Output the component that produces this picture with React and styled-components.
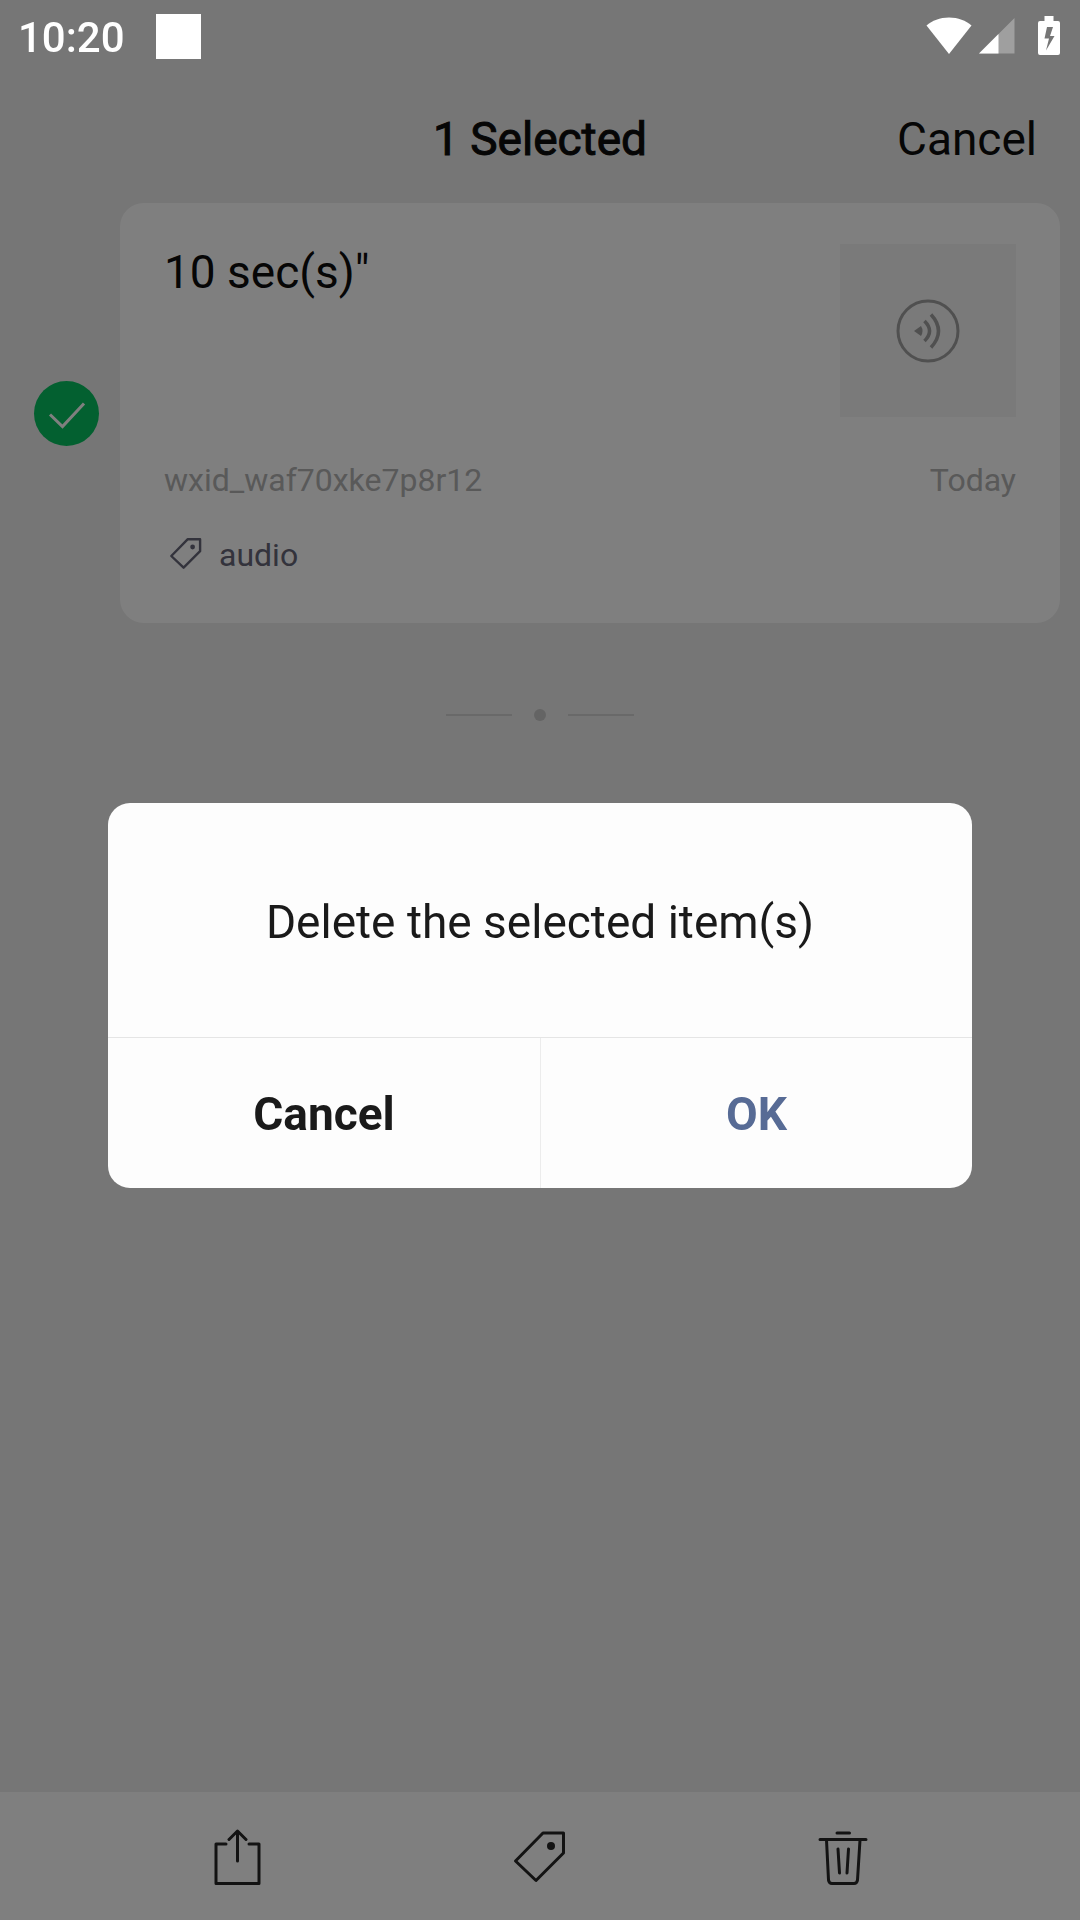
import React, { useState } from "react";
import styled, { createGlobalStyle } from "styled-components";

const GlobalStyle = createGlobalStyle`
  *, *::before, *::after { box-sizing: border-box; }
  body {
    margin: 0;
    background: #ededed;
    font-family: Roboto, "Liberation Sans", sans-serif;
    color: #0c0c0c;
  }
  button { font-family: inherit; border: 0; background: none; padding: 0; cursor: pointer; }
`;

const Screen = styled.div`
  min-height: 100vh;
  display: flex;
  flex-direction: column;
  background: #ededed;
`;

const StatusBar = styled.div`
  position: relative;
  z-index: 3;
  height: 72px;
  padding: 0 20px 0 18px;
  display: flex;
  align-items: center;
  color: #fff;
`;

const StatusGroup = styled.div`
  height: 72px;
  display: flex;
  align-items: center;
  gap: ${(p) => p.$gap}px;
  margin-left: ${(p) => (p.$end ? "auto" : "0")};
`;

const Clock = styled.time`
  padding-top: 3px;
  font-size: 42px;
  line-height: 48px;
  font-weight: 500;
`;

const Notification = styled.span`
  width: 45px;
  height: 45px;
  background: #fff;
`;

const Header = styled.header`
  height: 131px;
  padding: 3px 43px 0;
  display: grid;
  grid-template-columns: 1fr auto 1fr;
  align-items: center;
`;

const Title = styled.h1`
  grid-column: 2;
  margin: 0;
  font-size: 46px;
  line-height: 56px;
  font-weight: 400;
  -webkit-text-stroke: 1px currentColor;
`;

const HeaderButton = styled.button`
  justify-self: end;
  font-size: 46px;
  line-height: 56px;
  color: #0c0c0c;
`;

const Main = styled.main`
  flex: 1;
`;

const Item = styled.article`
  display: grid;
  grid-template-columns: 120px 1fr;
  align-items: center;
  padding-right: 20px;
`;

const CheckLabel = styled.label`
  display: grid;
  width: 65px;
  height: 65px;
  margin-left: 34px;

  > * { grid-area: 1 / 1; }
`;

const Check = styled.input`
  appearance: none;
  width: 65px;
  height: 65px;
  margin: 0;
  border-radius: 50%;
  border: ${(p) => (p.checked ? "0" : "3px solid #b2b2b2")};
  background: ${(p) => (p.checked ? "#07c160" : "transparent")};
`;

const Card = styled.div`
  padding: 41px 44px 48px;
  border-radius: 24px;
  background: #fff;
`;

const CardTop = styled.div`
  display: flex;
  justify-content: space-between;
  align-items: flex-start;
`;

const CardTitle = styled.h2`
  margin: 0;
  font-size: 46px;
  line-height: 56px;
  font-weight: 400;
`;

const Thumb = styled.div`
  width: 176px;
  height: 173px;
  display: flex;
  align-items: center;
  justify-content: center;
  background: #f4f4f4;
`;

const Meta = styled.div`
  margin-top: 43px;
  display: flex;
  justify-content: space-between;
  font-size: 32px;
  line-height: 40px;
  color: #b2b2b2;
`;

const TagRow = styled.div`
  margin-top: 35px;
  padding-left: 4px;
  display: flex;
  gap: 15px;
  font-size: 32px;
  line-height: 40px;
  color: #666678;
`;

const EndMark = styled.div`
  margin-top: 86px;
  display: flex;
  align-items: center;
  justify-content: center;
  gap: 22px;
`;

const Line = styled.span`
  width: 66px;
  height: 2px;
  background: #d2d2d2;
`;

const Dot = styled.span`
  width: 12px;
  height: 12px;
  border-radius: 50%;
  background: #c8c8c8;
`;

const Toolbar = styled.footer`
  height: 128px;
  padding: 0 86px;
  display: grid;
  grid-template-columns: repeat(3, 1fr);
  background: #fff;
`;

const ToolButton = styled.button`
  display: flex;
  align-items: center;
  justify-content: center;
  color: #262626;
`;

const Scrim = styled.div`
  position: fixed;
  inset: 0;
  z-index: 2;
  padding-top: 70px;
  display: flex;
  align-items: center;
  justify-content: center;
  background: rgba(0, 0, 0, 0.5);
`;

const Dialog = styled.section`
  width: 80%;
  border-radius: 22px;
  overflow: hidden;
  background: #fdfdfd;
`;

const Message = styled.p`
  margin: 0;
  padding: 91px 48px 87px;
  text-align: center;
  font-size: 46px;
  line-height: 56px;
  color: #1a1a1a;
`;

const Actions = styled.div`
  display: grid;
  grid-template-columns: 1fr 1fr;
  border-top: 1px solid #e5e5e5;
`;

const ActionButton = styled.button`
  height: 150px;
  padding-top: 2px;
  font-size: 46px;
  line-height: 56px;
  font-weight: 700;
  color: ${(p) => (p.$primary ? "#576b95" : "#1a1a1a")};

  & + & { border-left: 1px solid #ececec; }
`;

const Svg = ({ size = 60, width = size, height = size, box = "0 0 60 60", stroke = 3, children }) => (
  <svg
    width={width}
    height={height}
    viewBox={box}
    fill="none"
    stroke="currentColor"
    strokeWidth={stroke}
    strokeLinecap="round"
    strokeLinejoin="round"
    aria-hidden="true"
  >
    {children}
  </svg>
);

const WifiIcon = () => (
  <Svg width={46} height={38} box="0 0 46 38">
    <path d="M23 37 0.5 8.5C6 3.5 14 0.5 23 0.5s17 3 22.500 8z" fill="currentColor" stroke="none" />
  </Svg>
);

const SignalIcon = () => (
  <Svg width={36} height={36} box="0 0 36 36">
    <path d="M35.500 0v35.500H0z" fill="currentColor" opacity="0.3" stroke="none" />
    <path d="M19.500 16v19.500H0z" fill="currentColor" stroke="none" />
  </Svg>
);

const BatteryIcon = () => (
  <Svg width={22} height={40} box="0 0 22 40">
    <path
      d="M6.500 0h9v5H20q2 0 2 2v30q0 2-2 2H2q-2 0-2-2V7q0-2 2-2h4.500zM9 11 6.500 22.500H11L8 34.500 16.500 20H12L15 11z"
      fill="currentColor"
      fillRule="evenodd"
      stroke="none"
    />
  </Svg>
);

const TickIcon = () => (
  <svg width="65" height="65" viewBox="0 0 65 65" fill="none" stroke="#fff" strokeWidth="3" pointerEvents="none" aria-hidden="true">
    <path d="M16 33.500 28.500 45.500 50 22.500" />
  </svg>
);

const VoiceIcon = () => (
  <svg width="64" height="64" viewBox="0 0 64 64" fill="none" stroke="#a0a0a0" strokeWidth="3" aria-hidden="true">
    <circle cx="32" cy="32" r="30" />
    <path d="M18 32 25 27q3 5 0 10z" fill="#a0a0a0" stroke="none" />
    <path d="M28.500 22q10 10 0 20M35 15.500q15 16.500 0 33" strokeWidth="3.500" />
  </svg>
);

const TagIcon = ({ size, stroke }) => (
  <Svg size={size} stroke={stroke}>
    <path d="M33 7H53.500V27L26 54.500 5.500 35z" />
    <circle cx="41" cy="20" r="4" fill="currentColor" stroke="none" />
  </Svg>
);

const ShareIcon = () => (
  <Svg>
    <path d="M19 18H9V57.500H52V18H42M30.500 35V5M22 13.500 30.500 5 39 13.500" />
  </Svg>
);

const TrashIcon = () => (
  <Svg>
    <path d="M24 7H36.500M7 13.500H53M13.500 14 15.500 54Q16 57.500 19 57.500H41Q44 57.500 44.500 54L47 14M25 23 26.500 47M35.500 23 34 47" />
  </Svg>
);

export default function App() {
  const [checked, setChecked] = useState(true);
  const [open, setOpen] = useState(true);
  const close = () => setOpen(false);

  return (
    <>
      <GlobalStyle />
      <Screen>
        <StatusBar>
          <StatusGroup $gap={31}>
            <Clock>10:20</Clock>
            <Notification />
          </StatusGroup>
          <StatusGroup $end $gap={7}>
            <WifiIcon />
            <StatusGroup $gap={23}>
              <SignalIcon />
              <BatteryIcon />
            </StatusGroup>
          </StatusGroup>
        </StatusBar>

        <Header>
          <Title>1 Selected</Title>
          <HeaderButton type="button">Cancel</HeaderButton>
        </Header>

        <Main>
          <Item>
            <CheckLabel aria-label="Select item">
              <Check type="checkbox" checked={checked} onChange={(e) => setChecked(e.target.checked)} />
              {checked && <TickIcon />}
            </CheckLabel>
            <Card>
              <CardTop>
                <CardTitle>10 sec(s)"</CardTitle>
                <Thumb>
                  <VoiceIcon />
                </Thumb>
              </CardTop>
              <Meta>
                <span>wxid_waf70xke7p8r12</span>
                <span>Today</span>
              </Meta>
              <TagRow>
                <TagIcon size={36} stroke={4} />
                <span>audio</span>
              </TagRow>
            </Card>
          </Item>
          <EndMark>
            <Line />
            <Dot />
            <Line />
          </EndMark>
        </Main>

        <Toolbar>
          <ToolButton type="button" aria-label="Share">
            <ShareIcon />
          </ToolButton>
          <ToolButton type="button" aria-label="Tag">
            <TagIcon size={60} />
          </ToolButton>
          <ToolButton type="button" aria-label="Delete">
            <TrashIcon />
          </ToolButton>
        </Toolbar>
      </Screen>

      {open && (
        <Scrim>
          <Dialog role="alertdialog" aria-modal="true" aria-describedby="dialog-message">
            <Message id="dialog-message">Delete the selected item(s)</Message>
            <Actions>
              <ActionButton type="button" onClick={close}>Cancel</ActionButton>
              <ActionButton type="button" $primary onClick={close}>OK</ActionButton>
            </Actions>
          </Dialog>
        </Scrim>
      )}
    </>
  );
}
